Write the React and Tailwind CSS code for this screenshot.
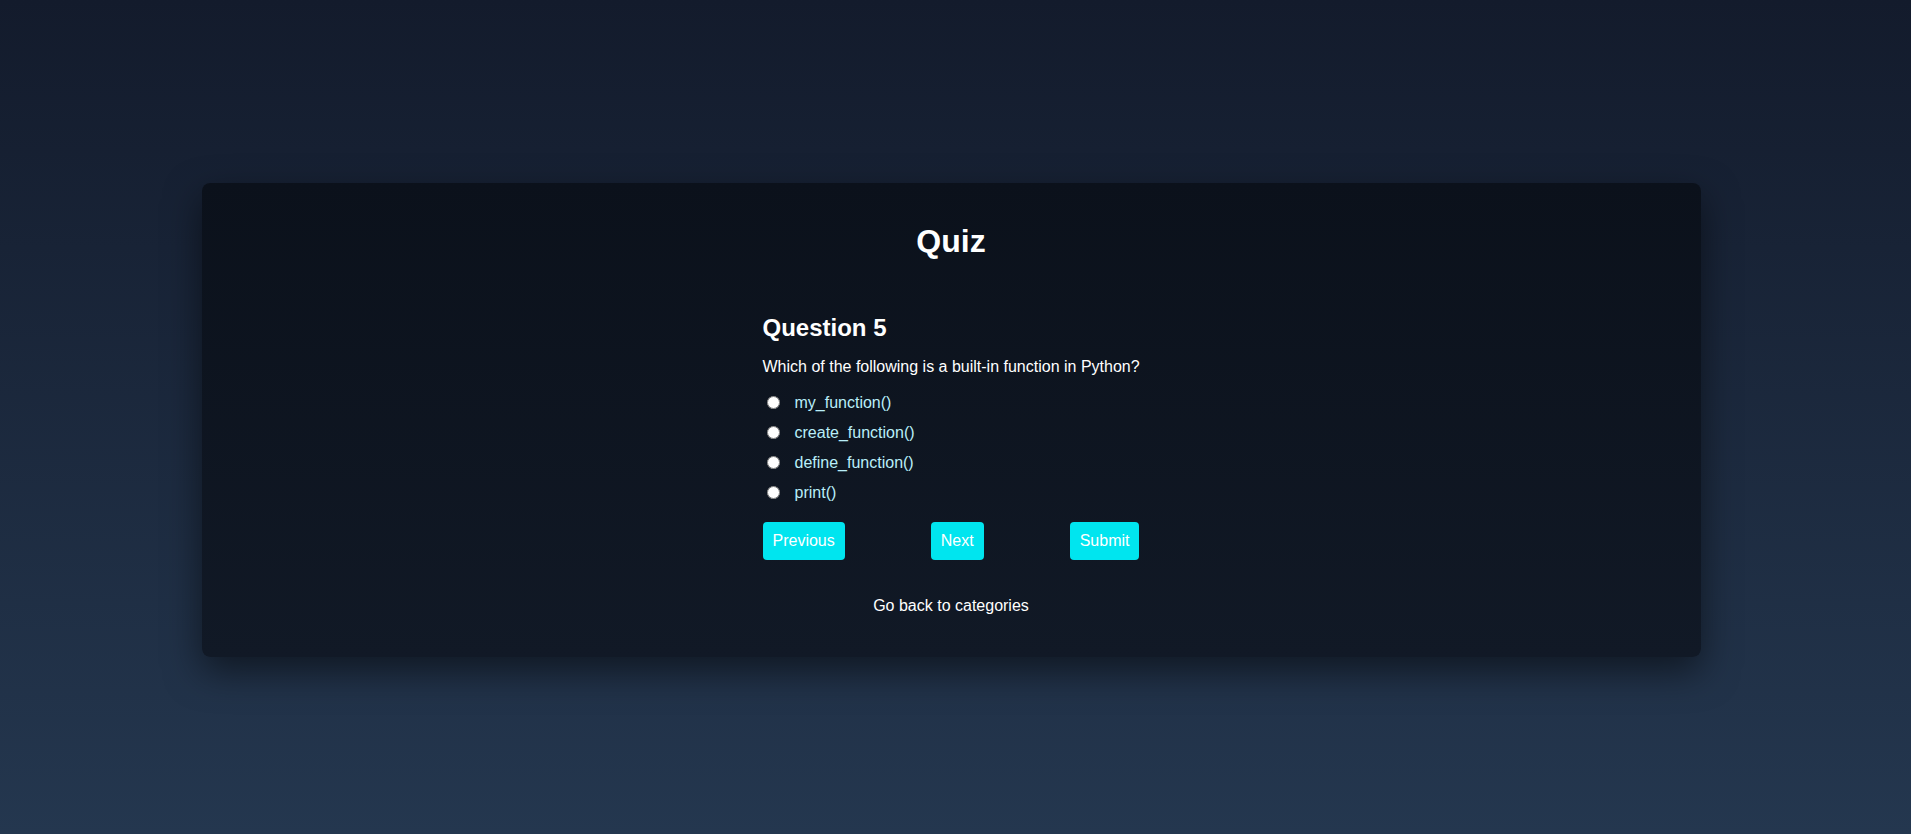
import { useState } from "react";

const options = ["my_function()", "create_function()", "define_function()", "print()"];

export default function App() {
  const [picked, setPicked] = useState(null);

  return (
    <div
      className="min-h-[834px] w-full bg-gradient-to-b from-[#131b2c] to-[#24374f] flex items-center justify-center pt-[5px] pr-[9px] text-white"
      style={{ fontFamily: '"Liberation Sans", Arial, sans-serif' }}
    >
      <div className="w-[1499px] rounded-lg bg-gradient-to-b from-[#0b111b] to-[#111926] shadow-[0_14px_36px_rgba(0,0,0,0.5)] pt-[38px] pb-[39px]">
        <h1 className="text-[32px] leading-[40px] font-bold text-center">Quiz</h1>

        <div className="w-[377px] mx-auto mt-[51px]">
          <h2 className="text-[24px] leading-[32px] font-bold">Question 5</h2>
          <p className="mt-[11px] text-[16px] leading-[24px] whitespace-nowrap">
            Which of the following is a built-in function in Python?
          </p>

          <div className="mt-[9px] flex flex-col">
            {options.map((opt, i) => (
              <label key={opt} className="flex items-center h-[30px] text-[16px] leading-[30px] text-[#b9eef9] cursor-pointer">
                <input
                  type="radio"
                  name="q5"
                  checked={picked === i}
                  onChange={() => setPicked(i)}
                  className="w-[13px] h-[13px] m-0 ml-[4px] mr-[15px]"
                />
                {opt}
              </label>
            ))}
          </div>

          <div className="mt-[14px] flex justify-between">
            <button className="h-[38px] px-[10px] rounded bg-[#00e5ef] text-white text-[16px]">Previous</button>
            <button className="h-[38px] px-[10px] rounded bg-[#00e5ef] text-white text-[16px]">Next</button>
            <button className="h-[38px] px-[10px] rounded bg-[#00e5ef] text-white text-[16px]">Submit</button>
          </div>
        </div>

        <div className="mt-[34px] text-center text-[16px] leading-[24px]">
          <a href="#" className="text-white">Go back to categories</a>
        </div>
      </div>
    </div>
  );
}
